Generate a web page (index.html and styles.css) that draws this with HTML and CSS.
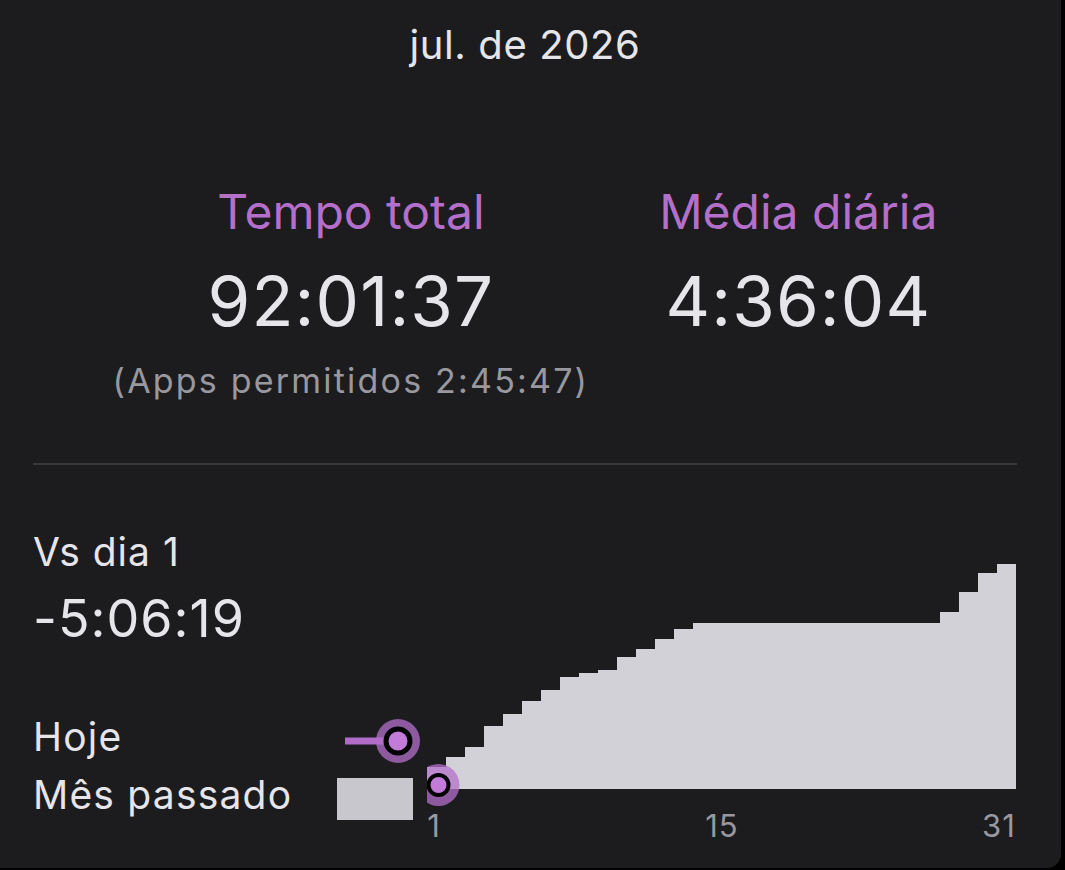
FILE: index.html
```html
<!DOCTYPE html>
<html lang="pt">
<head>
  <meta charset="UTF-8">
  <title>Tempo de uso - jul. de 2026</title>
  <link rel="stylesheet" href="styles.css">
</head>
<body>
  <div class="card">
    <h2 class="month">jul. de 2026</h2>

    <div class="stats">
      <div class="stat">
        <div class="stat-label">Tempo total</div>
        <div class="stat-value">92:01:37</div>
        <div class="stat-note">(Apps permitidos 2:45:47)</div>
      </div>
      <div class="stat">
        <div class="stat-label">Média diária</div>
        <div class="stat-value">4:36:04</div>
      </div>
    </div>

    <hr class="divider">

    <div class="compare">
      <div class="compare-info">
        <div class="compare-title">Vs dia 1</div>
        <div class="compare-value">-5:06:19</div>

        <div class="legend">
          <div class="legend-row">
            <span>Hoje</span>
            <svg class="legend-icon" width="90" height="58" viewBox="0 0 90 58">
              <line x1="8" y1="34" x2="60" y2="34" stroke="#b06cc8" stroke-width="7"/>
              <circle cx="61" cy="34" r="22" fill="#b46fcb" fill-opacity="0.75"/>
              <circle cx="61" cy="34" r="12" fill="#c27bd8" stroke="#000" stroke-width="5"/>
            </svg>
          </div>
          <div class="legend-row">
            <span>Mês passado</span>
            <svg class="legend-icon" width="90" height="58" viewBox="0 0 90 58">
              <rect x="0" y="13" width="76" height="42" fill="#c8c7cd"/>
            </svg>
          </div>
        </div>
      </div>

      <svg class="chart" width="600" height="318" viewBox="0 0 600 318">
        <!-- cumulative usage, one step per day -->
        <path fill="#d2d1d8" d="M0 260 V238 H19 V228 H38 V218 H57 V197 H76 V185 H95 V172 H114 V161 H133 V148 H152 V144 H171 V141 H190 V128 H209 V120 H228 V110 H247 V100 H266 V94 H513 V83 H532 V63 H551 V44 H570 V35 H589 V260 Z"/>
        <circle cx="11.5" cy="256" r="21" fill="#b46fcb" fill-opacity="0.75"/>
        <circle cx="11.5" cy="256" r="10" fill="#c27bd8" stroke="#000" stroke-width="4"/>
        <text class="axis" x="7" y="308" text-anchor="middle">1</text>
        <text class="axis" x="295" y="308" text-anchor="middle">15</text>
        <text class="axis" x="572" y="308" text-anchor="middle">31</text>
      </svg>
    </div>
  </div>
</body>
</html>
```

FILE: styles.css
```css
* {
  box-sizing: border-box;
}
body {
  margin: 0;
  background: #000;
  font-family: Inter, "Noto Sans", sans-serif;
  color: #e5e5ea;
}
.card {
  width: 1061px;
  height: 868px;
  padding: 21px 44px 0 33px;
  background: #1c1c1e;
  border-bottom-right-radius: 14px;
  overflow: hidden;
}
.month {
  margin: 0;
  font-size: 40px;
  line-height: 48px;
  font-weight: 400;
  letter-spacing: 0.6px;
  text-align: center;
}
.stats {
  display: flex;
  justify-content: center;
  gap: 70px;
  margin-top: 114px;
}
.stat {
  text-align: center;
}
.stat-label {
  color: #b46fcb;
  font-size: 48px;
  line-height: 58px;
}
.stat-value {
  margin-top: 20px;
  font-size: 69px;
  line-height: 80px;
  letter-spacing: 1.1px;
}
.stat-note {
  margin-top: 21px;
  color: #98989e;
  font-size: 34px;
  line-height: 38px;
  letter-spacing: 2.2px;
}
.divider {
  margin: 63px 0 0;
  border: none;
  height: 2px;
  background: #38383a;
}
.compare {
  display: flex;
  margin-top: 64px;
}
.compare-info {
  width: 394px;
  flex: none;
}
.compare-title {
  font-size: 39px;
  line-height: 46px;
  letter-spacing: 1px;
}
.compare-value {
  margin-top: 14px;
  font-size: 52px;
  line-height: 60px;
  letter-spacing: 1px;
}
.legend {
  margin-top: 58px;
}
.legend-row {
  display: flex;
  align-items: center;
  height: 58px;
  font-size: 39px;
  letter-spacing: 1.2px;
}
.legend-row span {
  flex: 1;
}
.legend-icon {
  display: block;
  flex: none;
}
.chart {
  display: block;
  flex: none;
}
.axis {
  fill: #98989e;
  font-family: Inter, "Noto Sans", sans-serif;
  font-size: 31px;
  letter-spacing: 1px;
}
```
